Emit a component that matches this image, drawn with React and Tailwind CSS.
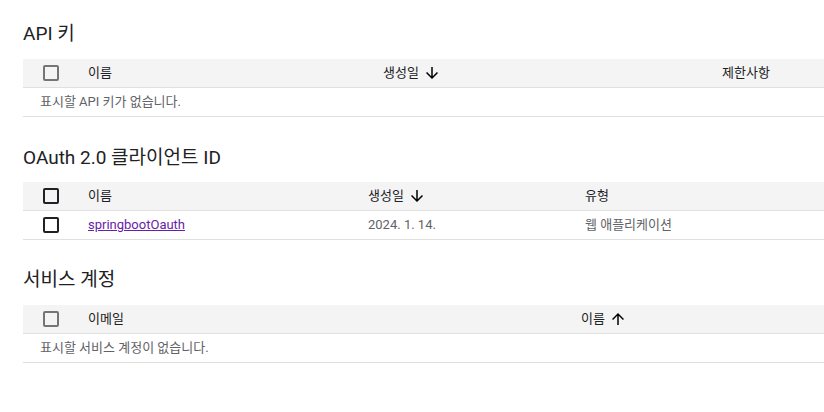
import React from 'react';

const FONT = { fontFamily: 'Roboto, "Noto Sans CJK KR", sans-serif' };

function Checkbox({ disabled }) {
  return (
    <span
      className={`block w-[16px] h-[16px] rounded-[2px] border-2 ${
        disabled ? 'border-[#757575]' : 'border-[#202124]'
      }`}
    />
  );
}

function SortArrow({ dir }) {
  const d =
    dir === 'down'
      ? 'M20 12l-1.41-1.41L13 16.17V4h-2v12.17l-5.58-5.59L4 12l8 8 8-8z'
      : 'M4 12l1.41 1.41L11 7.83V20h2V7.83l5.58 5.59L20 12l-8-8-8 8z';
  return (
    <svg viewBox="0 0 24 24" className="w-[18px] h-[18px] ml-[4px] shrink-0" fill="#000">
      <path d={d} />
    </svg>
  );
}

function HeaderRow({ disabled, children }) {
  return (
    <div className="flex items-center h-[29px] bg-[#f4f4f4] border-b border-[#e0e0e0] text-[13px] text-[#202124]">
      <div className="w-[65px] pl-[20px] shrink-0 flex items-center">
        <Checkbox disabled={disabled} />
      </div>
      {children}
    </div>
  );
}

function EmptyRow({ text }) {
  return (
    <div className="flex items-center h-[29px] border-b border-[#e0e0e0] pl-[17px] text-[13px] text-[#5f6368]">
      {text}
    </div>
  );
}

function Heading({ children }) {
  return <h2 className="h-[24px] leading-[24px] text-[19px] text-[#202124]">{children}</h2>;
}

export default function App() {
  return (
    <div className="w-[824px] h-[412px] overflow-hidden bg-white pl-[23px] pt-[22px]" style={FONT}>
      {/* API 키 */}
      <section>
        <Heading>API 키</Heading>
        <div className="mt-[13px] w-[820px]">
          <HeaderRow disabled>
            <div className="w-[295px] shrink-0">이름</div>
            <div className="w-[339px] shrink-0 flex items-center">
              생성일
              <SortArrow dir="down" />
            </div>
            <div className="flex-1">제한사항</div>
          </HeaderRow>
          <EmptyRow text="표시할 API 키가 없습니다." />
        </div>
      </section>

      {/* OAuth */}
      <section className="mt-[29px]">
        <Heading>OAuth 2.0 클라이언트 ID</Heading>
        <div className="mt-[12px] w-[820px]">
          <HeaderRow>
            <div className="w-[280px] shrink-0">이름</div>
            <div className="w-[217px] shrink-0 flex items-center">
              생성일
              <SortArrow dir="down" />
            </div>
            <div className="flex-1">유형</div>
          </HeaderRow>
          <div className="flex items-center h-[29px] border-b border-[#e0e0e0] text-[13px] text-[#5f6368]">
            <div className="w-[65px] pl-[20px] shrink-0 flex items-center">
              <Checkbox />
            </div>
            <div className="w-[280px] shrink-0">
              <a href="#" className="text-[#681da8] underline">springbootOauth</a>
            </div>
            <div className="w-[217px] shrink-0">2024. 1. 14.</div>
            <div className="flex-1">웹 애플리케이션</div>
          </div>
        </div>
      </section>

      {/* 서비스 계정 */}
      <section className="mt-[28px]">
        <Heading>서비스 계정</Heading>
        <div className="mt-[13px] w-[820px]">
          <HeaderRow disabled>
            <div className="w-[493px] shrink-0">이메일</div>
            <div className="flex-1 flex items-center">
              이름
              <SortArrow dir="up" />
            </div>
          </HeaderRow>
          <EmptyRow text="표시할 서비스 계정이 없습니다." />
        </div>
      </section>
    </div>
  );
}
